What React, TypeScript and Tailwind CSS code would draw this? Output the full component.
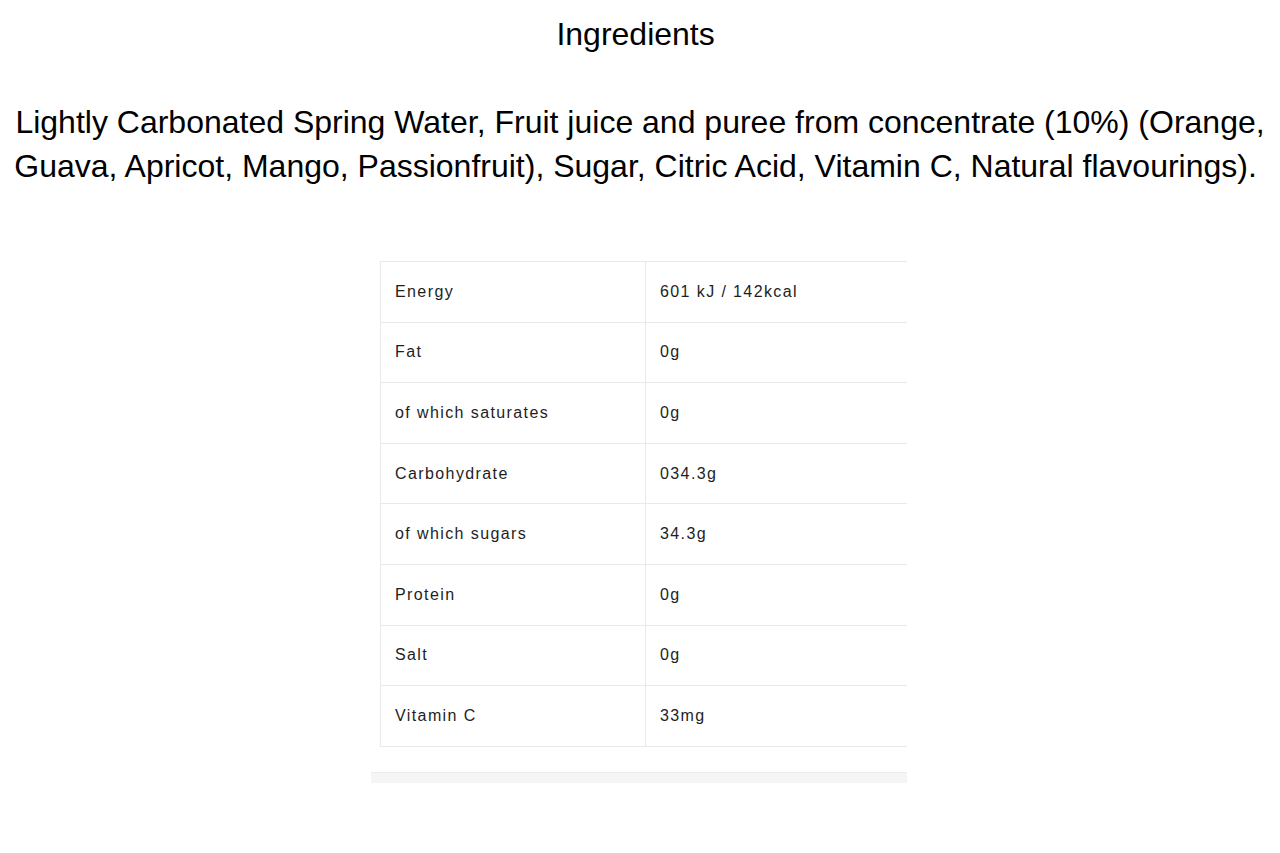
const rows = [
  { label: "Energy", value: "601 kJ / 142kcal" },
  { label: "Fat", value: "0g" },
  { label: "of which saturates", value: "0g" },
  { label: "Carbohydrate", value: "034.3g" },
  { label: "of which sugars", value: "34.3g" },
  { label: "Protein", value: "0g" },
  { label: "Salt", value: "0g" },
  { label: "Vitamin C", value: "33mg" },
];

export default function App() {
  return (
    <div className="min-h-screen w-[1280px] bg-white font-['Liberation_Sans',Arial,sans-serif] text-black">
      {/* Heading */}
      <h1 className="pt-[14px] text-center text-[32px] leading-[40px]">Ingredients&nbsp;</h1>

      {/* Ingredient list */}
      <p className="mt-[46px] text-center text-[32px] leading-[44px]">
        Lightly Carbonated Spring Water, Fruit juice and puree from concentrate (10%) (Orange,
        <br />
        Guava, Apricot, Mango, Passionfruit), Sugar, Citric Acid, Vitamin C, Natural flavourings).&nbsp;
      </p>

      {/* Nutrition table */}
      <div className="ml-[371px] mt-[73px] w-[536px]">
        <div className="ml-[9px] overflow-hidden border-t border-l border-[#e9e9e9] text-[16px] tracking-[1.4px] text-[#1e1e1e]">
          {rows.map((row) => (
            <div key={row.label} className="flex h-[60.6px] border-b border-[#e9e9e9]">
              <div className="flex w-[265px] items-center border-r border-[#e9e9e9] pl-[14px]">{row.label}</div>
              <div className="flex flex-1 items-center pl-[14px]">{row.value}</div>
            </div>
          ))}
        </div>
        <div className="mt-[25px] h-[11px] border-t border-[#ececec] bg-[#f5f5f5]" />
      </div>
    </div>
  );
}
